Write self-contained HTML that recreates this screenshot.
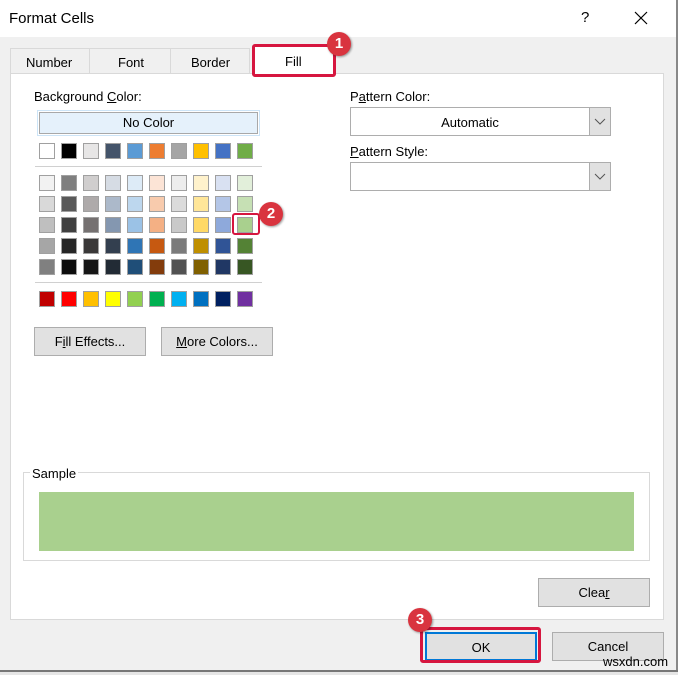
<!DOCTYPE html>
<html><head><meta charset="utf-8"><style>
*{margin:0;padding:0;box-sizing:border-box}
body{width:678px;height:675px;overflow:hidden;background:#f0f0f0;font-family:"Liberation Sans",sans-serif;font-size:13px;color:#000;position:relative}
.a{position:absolute}
.sw{position:absolute;width:16px;height:16px;border:1px solid #a0a0a0}
.btn{position:absolute;background:#e1e1e1;border:1px solid #adadad;text-align:center;font-size:13px}
.badge{position:absolute;width:24px;height:24px;border-radius:50%;background:#d9343f;color:#fff;font-weight:bold;font-size:15px;text-align:center;line-height:24px;box-shadow:1px 1px 2px rgba(0,0,0,.4)}
.red{position:absolute;border:3px solid #d6163f;border-radius:3px}
u{text-decoration:underline}
</style></head><body>
<div class="a" style="left:0;top:0;width:678px;height:37px;background:#fff"></div>
<div class="a" style="left:9px;top:10px;font-size:15px">Format Cells</div>
<div class="a" style="left:581px;top:9px;font-size:15px">?</div>
<svg class="a" style="left:634px;top:11px" width="14" height="14"><path d="M1 1L13 13M13 1L1 13" stroke="#000" stroke-width="1.2"/></svg>
<div class="a" style="left:676px;top:0;width:2px;height:675px;background:#888"></div>
<div class="a" style="left:0;top:670px;width:678px;height:2px;background:#777"></div>
<div class="a" style="left:0;top:672px;width:678px;height:3px;background:#e6e6e6"></div>

<div class="a" style="left:10px;top:48px;width:240px;height:26px;border:1px solid #d9d9d9;border-bottom:none;background:#f0f0f0"></div>
<div class="a" style="left:89px;top:48px;width:1px;height:26px;background:#d9d9d9"></div>
<div class="a" style="left:170px;top:48px;width:1px;height:26px;background:#d9d9d9"></div>
<div class="a" style="left:26px;top:55px">Number</div>
<div class="a" style="left:118px;top:55px">Font</div>
<div class="a" style="left:191px;top:55px">Border</div>

<div class="a" style="left:10px;top:73px;width:654px;height:547px;background:#fff;border:1px solid #d9d9d9"></div>
<div class="a" style="left:253px;top:46px;width:81px;height:30px;background:#fff"></div>
<div class="red" style="left:252px;top:44px;width:84px;height:33px"></div>
<div class="a" style="left:285px;top:54px">Fill</div>
<div class="badge" style="left:327px;top:32px">1</div>

<div class="a" style="left:34px;top:89px">Background <u>C</u>olor:</div>
<div class="a" style="left:37px;top:110px;width:223px;height:26px;border:1px solid #cce4f7"></div>
<div class="a" style="left:39px;top:112px;width:219px;height:22px;background:#e5f1fb;border:1px solid #a8a8a8;text-align:center;line-height:20px">No Color</div>

<div class="a" style="left:35px;top:166px;width:227px;height:1px;background:#d0d0d0"></div>
<div class="a" style="left:35px;top:282px;width:227px;height:1px;background:#d0d0d0"></div>

<div id="g"></div>

<div class="red" style="left:232px;top:213px;width:28px;height:22px;border-width:2px"></div>
<div class="badge" style="left:259px;top:202px">2</div>

<div class="btn" style="left:34px;top:327px;width:112px;height:29px;line-height:27px">F<u>i</u>ll Effects...</div>
<div class="btn" style="left:161px;top:327px;width:112px;height:29px;line-height:27px"><u>M</u>ore Colors...</div>

<div class="a" style="left:350px;top:89px">P<u>a</u>ttern Color:</div>
<div class="a" style="left:350px;top:107px;width:261px;height:29px;border:1px solid #adadad;background:#fff"></div>
<div class="a" style="left:350px;top:115px;width:240px;text-align:center">Automatic</div>
<div class="a" style="left:589px;top:108px;width:21px;height:27px;background:#e1e1e1;border-left:1px solid #adadad"></div>
<svg class="a" style="left:594px;top:118px" width="12" height="8"><path d="M1 1L6 6L11 1" stroke="#555" fill="none"/></svg>
<div class="a" style="left:350px;top:144px"><u>P</u>attern Style:</div>
<div class="a" style="left:350px;top:162px;width:261px;height:29px;border:1px solid #adadad;background:#fff"></div>
<div class="a" style="left:589px;top:163px;width:21px;height:27px;background:#e1e1e1;border-left:1px solid #adadad"></div>
<svg class="a" style="left:594px;top:173px" width="12" height="8"><path d="M1 1L6 6L11 1" stroke="#555" fill="none"/></svg>

<div class="a" style="left:23px;top:472px;width:627px;height:89px;border:1px solid #d9d9d9"></div>
<div class="a" style="left:30px;top:466px;background:#fff;padding:0 2px">Sample</div>
<div class="a" style="left:39px;top:492px;width:595px;height:59px;background:#a9d08e"></div>

<div class="btn" style="left:538px;top:578px;width:112px;height:29px;line-height:27px">Clea<u>r</u></div>

<div class="btn" style="left:425px;top:632px;width:112px;height:29px;line-height:27px;border:2px solid #0078d7">OK</div>
<div class="red" style="left:420px;top:627px;width:121px;height:36px"></div>
<div class="badge" style="left:408px;top:608px">3</div>
<div class="btn" style="left:552px;top:632px;width:112px;height:29px;line-height:27px">Cancel</div>
<div class="a" style="left:603px;top:654px;font-size:13px;color:#000">wsxdn.com</div>

<script>
var rows=[
["#ffffff","#000000","#e7e6e6","#44546a","#5b9bd5","#ed7d31","#a5a5a5","#ffc000","#4472c4","#70ad47"],
["#f2f2f2","#7f7f7f","#d0cece","#d6dce4","#ddebf7","#fce4d6","#ededed","#fff2cc","#d9e1f2","#e2efda"],
["#d9d9d9","#595959","#aeaaaa","#acb9ca","#bdd7ee","#f8cbad","#dbdbdb","#ffe699","#b4c6e7","#c6e0b4"],
["#bfbfbf","#404040","#757171","#8497b0","#9bc2e6","#f4b084","#c9c9c9","#ffd966","#8ea9db","#a9d08e"],
["#a6a6a6","#262626","#3a3838","#333f4f","#2f75b5","#c65911","#7b7b7b","#bf8f00","#305496","#548235"],
["#808080","#0d0d0d","#161616","#222b35","#1f4e78","#833c0c","#525252","#806000","#203764","#375623"],
["#c00000","#ff0000","#ffc000","#ffff00","#92d050","#00b050","#00b0f0","#0070c0","#002060","#7030a0"]];
var ys=[143,175,196,217,238,259,291],h="";
rows.forEach(function(r,i){r.forEach(function(c,j){h+='<div class="sw" style="left:'+(39+j*22)+'px;top:'+ys[i]+'px;background:'+c+'"></div>';});});
document.getElementById('g').innerHTML=h;
</script>
</body></html>
